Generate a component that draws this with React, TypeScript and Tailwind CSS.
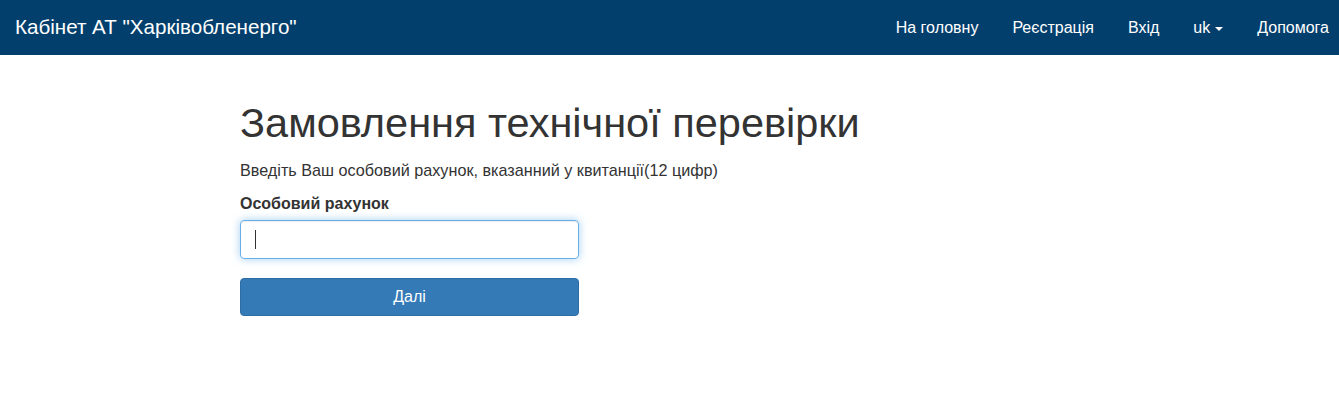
import { useState } from 'react';

const navLinks = ['На головну', 'Реєстрація', 'Вхід'];

export default function App() {
  const [account, setAccount] = useState('');

  return (
    <div className="min-h-[398px] bg-white text-[#333] font-['Liberation_Sans',Arial,sans-serif]">
      <nav className="h-[55px] bg-[#033f6d] flex items-center justify-between pl-[15px] pr-[10px]">
        <a href="#" className="text-[20.6px] text-white leading-none">
          Кабінет АТ "Харківобленерго"
        </a>
        <ul className="flex items-center text-[16px] text-white">
          {navLinks.map((l) => (
            <li key={l}>
              <a href="#" className="px-[17px]">
                {l}
              </a>
            </li>
          ))}
          <li>
            <a href="#" className="px-[17px] flex items-center gap-[5px]">
              uk
              <span className="inline-block w-0 h-0 border-x-[4px] border-x-transparent border-t-[4px] border-t-white mt-[2px]" />
            </a>
          </li>
          <li>
            <a href="#" className="pl-[17px]">
              Допомога
            </a>
          </li>
        </ul>
      </nav>

      <main className="mx-auto w-[859px] pt-[45px]">
        <h1 className="text-[41.5px] leading-[46px] font-normal">Замовлення технічної перевірки</h1>
        <p className="mt-[13px] text-[16.2px] leading-[22px]">
          Введіть Ваш особовий рахунок, вказанний у квитанції(12 цифр)
        </p>

        <form className="w-[339px] mt-[12px]" onSubmit={(e) => e.preventDefault()}>
          <label className="block text-[16px] leading-[22px] font-bold">Особовий рахунок</label>
          <div className="relative mt-[5px]">
            <input
              value={account}
              onChange={(e) => setAccount(e.target.value)}
              className="block w-full h-[39px] px-[14px] text-[16px] border border-[#66afe9] rounded-[4px] outline-none shadow-[inset_0_1px_1px_rgba(0,0,0,.075),0_0_8px_rgba(102,175,233,.6)]"
            />
            {!account && (
              <span className="absolute left-[15px] top-[10px] w-px h-[19px] bg-[#333]" />
            )}
          </div>
          <button
            type="submit"
            className="mt-[19px] w-full h-[38px] bg-[#337ab7] border border-[#2e6da4] rounded-[4px] text-white text-[16px]"
          >
            Далі
          </button>
        </form>
      </main>
    </div>
  );
}
